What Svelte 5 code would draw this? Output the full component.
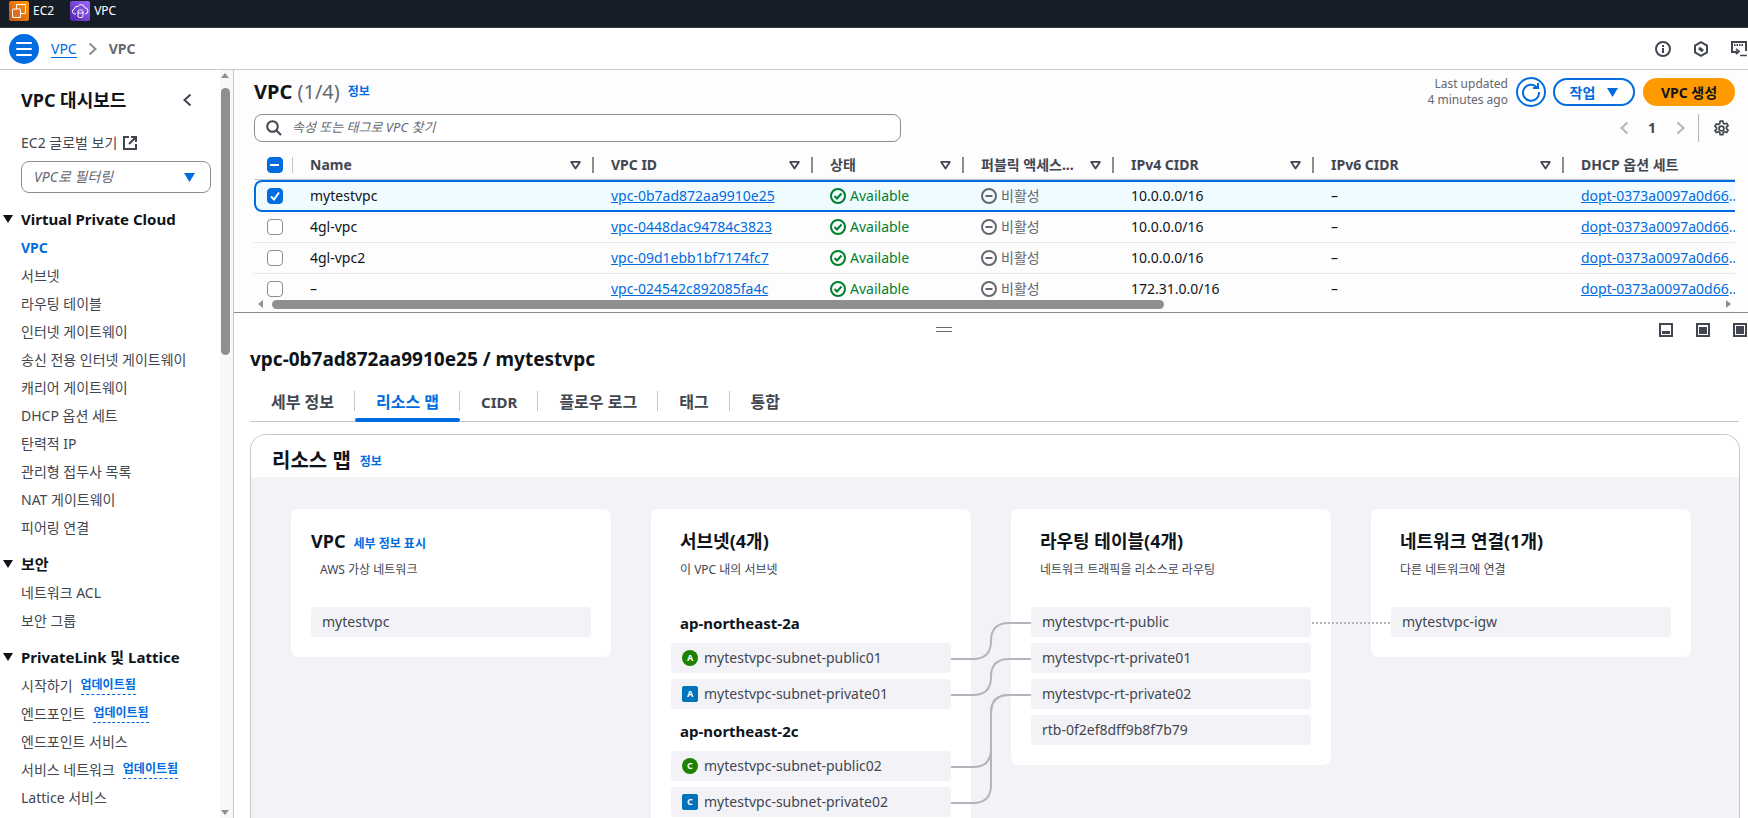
<script>
  const navA = ['서브넷','라우팅 테이블','인터넷 게이트웨이','송신 전용 인터넷 게이트웨이','캐리어 게이트웨이','DHCP 옵션 세트','탄력적 IP','관리형 접두사 목록','NAT 게이트웨이','피어링 연결'];
  const navC = [['시작하기',true],['엔드포인트',true],['엔드포인트 서비스',false],['서비스 네트워크',true],['Lattice 서비스',false]];
  const cols = [['Name',1],['VPC ID',1],['상태',1],['퍼블릭 액세스...',1],['IPv4 CIDR',1],['IPv6 CIDR',1],['DHCP 옵션 세트',0]];
  const rows = [
    {n:'mytestvpc',id:'vpc-0b7ad872aa9910e25',c:'10.0.0.0/16',sel:true},
    {n:'4gl-vpc',id:'vpc-0448dac94784c3823',c:'10.0.0.0/16'},
    {n:'4gl-vpc2',id:'vpc-09d1ebb1bf7174fc7',c:'10.0.0.0/16'},
    {n:'–',id:'vpc-024542c892085fa4c',c:'172.31.0.0/16'}
  ];
  const tabs = ['세부 정보','리소스 맵','CIDR','플로우 로그','태그','통합'];
  const subnets = [
    {az:'ap-northeast-2a',items:[['A','mytestvpc-subnet-public01',true],['A','mytestvpc-subnet-private01',false]]},
    {az:'ap-northeast-2c',items:[['C','mytestvpc-subnet-public02',true],['C','mytestvpc-subnet-private02',false]]}
  ];
  const routes = ['mytestvpc-rt-public','mytestvpc-rt-private01','mytestvpc-rt-private02','rtb-0f2ef8dff9b8f7b79'];
</script>

{#snippet filter()}
  <svg class="filter" viewBox="0 0 12 10" width="11" height="9"><path d="M1.2 1h9.6L6 8.4z" fill="none" stroke="#424650" stroke-width="2" stroke-linejoin="round"/></svg>
{/snippet}

<div class="page">
  <header class="top">
    <span class="svc">
      <svg width="20" height="20" viewBox="0 0 20 20"><defs><linearGradient id="o" x1="0" y1="1" x2="1" y2="0"><stop offset="0" stop-color="#c8511b"/><stop offset="1" stop-color="#ff9900"/></linearGradient></defs><rect width="20" height="20" rx="2" fill="url(#o)"/><g fill="none" stroke="#fff" stroke-width="1"><rect x="7.500" y="3.500" width="9" height="9" rx=".5"/><rect x="3.500" y="8" width="8" height="8.500" rx=".5" fill="#e0701e"/></g></svg>
      EC2
    </span>
    <span class="svc">
      <svg width="20" height="20" viewBox="0 0 20 20"><defs><linearGradient id="p" x1="0" y1="1" x2="1" y2="0"><stop offset="0" stop-color="#4d27a8"/><stop offset="1" stop-color="#a166ff"/></linearGradient></defs><rect width="20" height="20" rx="2" fill="url(#p)"/><g fill="none" stroke="#fff" stroke-width="1"><path d="M6 13H5a2.600 2.600 0 0 1-.6-5.100A3 3 0 0 1 8 5.400a3.600 3.600 0 0 1 6.700 1.400A3.100 3.100 0 0 1 15 13"/><rect x="8" y="9" width="5" height="7.500" rx="1.500"/><path d="M8 11a2.500 1.200 0 0 0 5 0"/></g></svg>
      VPC
    </span>
  </header>

  <nav class="crumbs">
    <button class="burger" aria-label="메뉴"><i></i><i></i><i></i></button>
    <a class="crumb-link">VPC</a>
    <svg width="9" height="14" viewBox="0 0 9 14"><path d="M1.500 1.500 7.500 7l-6 5.500" fill="none" stroke="#8c8c94" stroke-width="2"/></svg>
    <b class="crumb-cur">VPC</b>
    <span class="spacer"></span>
    <span class="nav-icons">
      <svg width="16" height="16" viewBox="0 0 16 16"><circle cx="8" cy="8" r="7" fill="none" stroke="#424650" stroke-width="2"/><path d="M8 7v5M8 4v2" stroke="#424650" stroke-width="2"/></svg>
      <svg width="16" height="16" viewBox="0 0 16 16"><path d="M8 1.200 14 4.600v6.800L8 14.800 2 11.400V4.600z" fill="none" stroke="#424650" stroke-width="2"/><path d="M6 7 10 10" stroke="#424650" stroke-width="3"/></svg>
      <svg width="16" height="16" viewBox="0 0 16 16"><path d="M6 11H1V1h14v9" fill="none" stroke="#424650" stroke-width="2"/><path d="M3 4h9" fill="none" stroke="#424650" stroke-width="2" stroke-dasharray="1.500 1"/><path d="M5 8l3 2.500L5 13M9 14.500h7" fill="none" stroke="#424650" stroke-width="1.700"/></svg>
    </span>
  </nav>

  <div class="shell-body">
    <aside class="side">
      <div class="side-inner">
        <div class="side-head"><h2>VPC 대시보드</h2>
          <svg width="9" height="14" viewBox="0 0 9 14"><path d="M7.500 1.500 1.500 7l6 5.500" fill="none" stroke="#424650" stroke-width="2"/></svg>
        </div>
        <div class="ec2">EC2 글로벌 보기
          <svg width="14" height="14" viewBox="0 0 14 14"><path d="M6 1H1v12h12V8M8 1h5v5M13 1 6 8" fill="none" stroke="#424650" stroke-width="2"/></svg>
        </div>
        <div class="filter-sel"><em>VPC로 필터링</em><svg width="11" height="9" viewBox="0 0 11 9"><path d="M0 0h11L5.500 9z" fill="#006ce0"/></svg></div>

        <h3 class="grp first"><span class="tri"></span>Virtual Private Cloud</h3>
        <div class="it cur">VPC</div>
        {#each navA as t}<div class="it">{t}</div>{/each}

        <h3 class="grp"><span class="tri"></span>보안</h3>
        <div class="it">네트워크 ACL</div>
        <div class="it">보안 그룹</div>

        <h3 class="grp"><span class="tri"></span>PrivateLink 및 Lattice</h3>
        {#each navC as [t,u]}<div class="it">{t}{#if u}<span class="upd">업데이트됨</span>{/if}</div>{/each}
      </div>
      <div class="vscroll"><span class="up"></span><span class="thumb"></span><span class="down"></span></div>
    </aside>

    <main class="main">
      <section class="list">
        <div class="list-head">
          <h1>VPC <span>(1/4)</span></h1><a class="info">정보</a>
          <span class="spacer"></span>
          <div class="updated">Last updated<br>4 minutes ago</div>
          <button class="refresh" aria-label="새로고침"><svg width="20" height="20" viewBox="0 0 20 20"><path d="M15.800 5.200A8 8 0 1 0 18 10" fill="none" stroke="#006ce0" stroke-width="2"/><path d="M17 1v5h-5" fill="none" stroke="#006ce0" stroke-width="2"/></svg></button>
          <button class="act">작업<svg width="11" height="9" viewBox="0 0 11 9"><path d="M0 0h11L5.500 9z" fill="#006ce0"/></svg></button>
          <button class="create">VPC 생성</button>
        </div>
        <div class="search-row">
          <div class="search">
            <svg width="16" height="16" viewBox="0 0 16 16"><circle cx="6.500" cy="6.500" r="5.300" fill="none" stroke="#424650" stroke-width="2"/><path d="m10.500 10.500 4.500 4.500" stroke="#424650" stroke-width="2"/></svg>
            <em>속성 또는 태그로 VPC 찾기</em>
          </div>
          <div class="pager">
            <svg width="9" height="14" viewBox="0 0 9 14"><path d="M7.500 1.500 1.500 7l6 5.500" fill="none" stroke="#b4b4bb" stroke-width="2"/></svg>
            <b>1</b>
            <svg width="9" height="14" viewBox="0 0 9 14"><path d="M1.500 1.500 7.500 7l-6 5.500" fill="none" stroke="#b4b4bb" stroke-width="2"/></svg>
            <span class="psep"></span>
            <svg width="17" height="17" viewBox="0 0 16 16"><circle cx="8" cy="8" r="2.300" fill="none" stroke="#424650" stroke-width="1.600"/><path d="M6.700 1h2.600l.4 2 1.300.7 1.900-.7 1.300 2.300-1.500 1.300v1.600l1.500 1.300-1.300 2.300-1.900-.7-1.300.7-.4 2H6.700l-.4-2-1.300-.7-1.900.7L1.800 10l1.500-1.300V7.200L1.800 5.900 3.100 3.600l1.900.7 1.300-.7z" fill="none" stroke="#424650" stroke-width="1.600" stroke-linejoin="round"/></svg>
          </div>
        </div>
        <div class="table">
          <div class="tr th">
            <div class="c0"><span class="cb on"><i class="dash"></i></span><u class="sep light"></u></div>
            {#each cols as [t,f]}
              <div class="c">{t}{#if f}{@render filter()}<u class="sep"></u>{/if}</div>
            {/each}
          </div>
          {#each rows as r}
            <div class="tr row" class:sel={r.sel}>
              <div class="c0"><span class="cb" class:on={r.sel}>{#if r.sel}<svg width="12" height="12" viewBox="0 0 12 12"><path d="M2 6.500 5 9.500 10 2.500" fill="none" stroke="#fff" stroke-width="2"/></svg>{/if}</span></div>
              <div class="c">{r.n}</div>
              <div class="c"><a class="lnk">{r.id}</a></div>
              <div class="c ok"><svg width="16" height="16" viewBox="0 0 16 16"><circle cx="8" cy="8" r="7" fill="none" stroke="#00802f" stroke-width="2"/><path d="m4.500 8 2.500 2.500L11.500 5.500" fill="none" stroke="#00802f" stroke-width="2"/></svg>Available</div>
              <div class="c off"><svg width="16" height="16" viewBox="0 0 16 16"><circle cx="8" cy="8" r="7" fill="none" stroke="#656871" stroke-width="2"/><path d="M4.500 8h7" stroke="#656871" stroke-width="2"/></svg>비활성</div>
              <div class="c">{r.c}</div>
              <div class="c">–</div>
              <div class="c"><a class="lnk">dopt-0373a0097a0d66</a><span class="dots">..</span></div>
            </div>
          {/each}
        </div>
        <div class="hscroll"><span class="la"></span><span class="hthumb"></span><span class="ra"></span></div>
      </section>

      <section class="detail">
        <div class="handle"></div>
        <div class="split-icons">
          <span class="sp s1"></span><span class="sp s2"></span><span class="sp s3"></span>
        </div>
        <h2 class="d-title">vpc-0b7ad872aa9910e25 / mytestvpc</h2>
        <div class="tabs">
          {#each tabs as t,i}<div class="tab" class:active={i===1} class:latin={t==='CIDR'}>{t}</div>{/each}
        </div>
        <div class="map">
          <div class="map-head"><h2>리소스 맵</h2><a class="info">정보</a></div>
          <div class="map-body">
            <div class="card short">
              <h3>VPC <a class="info big">세부 정보 표시</a></h3>
              <p class="vp">AWS 가상 네트워크</p>
              <div class="pill first">mytestvpc</div>
            </div>
            <div class="card">
              <h3 class="in">서브넷(4개)</h3>
              <p class="in">이 VPC 내의 서브넷</p>
              {#each subnets as s,i}
                <div class="az" class:a1={i===0}>{s.az}</div>
                {#each s.items as [l,t,pub]}
                  <div class="pill sub"><span class="badge" class:pub>{l}</span>{t}</div>
                {/each}
              {/each}
            </div>
            <div class="card rt">
              <h3 class="in">라우팅 테이블(4개)</h3>
              <p class="in">네트워크 트래픽을 리소스로 라우팅</p>
              {#each routes as t,i}<div class="pill" class:first={i===0}>{t}</div>{/each}
            </div>
            <div class="card short">
              <h3 class="in">네트워크 연결(1개)</h3>
              <p class="in">다른 네트워크에 연결</p>
              <div class="pill first">mytestvpc-igw</div>
            </div>
            <svg class="wires" width="1488" height="341" viewBox="251 477 1488 341">
              <g fill="none" stroke="#b4b4bb" stroke-width="2">
                <path d="M951 659H973Q991 659 991 641Q991 623 1009 623H1031"/>
                <path d="M951 695H973Q991 695 991 677Q991 659 1009 659H1031"/>
                <path d="M951 767H973Q991 767 991 749V713Q991 695 1009 695H1031"/>
                <path d="M951 803H973Q991 803 991 785V713Q991 695 1009 695H1031"/>
                <path d="M1312 623H1391" stroke-dasharray="2 2"/>
              </g>
            </svg>
          </div>
        </div>
      </section>
    </main>
  </div>
</div>

<style>
  :global(body){margin:0;background:#fff;overflow:hidden}
  .page{width:1748px;height:818px;overflow:hidden;display:flex;flex-direction:column;font:14px/20px "Noto Sans","Noto Sans CJK KR",sans-serif;color:#0f141a}
  h1,h2,h3,p{margin:0}
  .spacer{flex:1}
  a{color:#006ce0}
  .top{background:#161d26;border-bottom:1px solid #333a45;display:flex;align-items:flex-start;padding:1px 0 0 9px;gap:16px;flex:none;box-sizing:border-box;height:28px}
  .svc{display:flex;align-items:center;gap:4px;color:#fff;font-size:12px;line-height:20px}
  .crumbs{height:41px;border-bottom:1px solid #c6c6cd;display:flex;align-items:center;padding:0 0 0 9px;flex:none}
  .burger{width:30px;height:30px;border-radius:50%;border:0;background:#006ce0;padding:8px 7px;display:flex;flex-direction:column;justify-content:space-between;margin-right:12px}
  .burger i{display:block;height:2px;background:#fff;border-radius:1px}
  .crumb-link{border-bottom:1px solid #006ce0;line-height:17px;margin-right:11px;font-size:14px}
  .crumb-cur{margin-left:12px;color:#656871;font-weight:700}
  .nav-icons{display:flex;gap:22px;margin-right:-1px;width:94px;overflow:hidden;flex:none}
  .nav-icons svg{flex:none}
  .shell-body{flex:1;display:flex;min-height:0}
  .side{width:233px;flex:none;border-right:1px solid #c6c6cd;display:flex;overflow:hidden}
  .side-inner{flex:1;padding:19px 0 0 21px;min-width:0}
  .side-head{display:flex;align-items:center;justify-content:space-between;padding-right:28px;height:22px}
  .side-head h2{font-size:18px;font-weight:700;line-height:22px}
  .ec2{margin-top:22px;color:#424650;display:flex;align-items:center;gap:6px;line-height:20px}
  .filter-sel{margin-top:8px;width:190px;height:32px;box-sizing:border-box;border:1px solid #8c8c94;border-radius:8px;display:flex;align-items:center;justify-content:space-between;padding:0 15px 0 12px}
  .filter-sel em{color:#656871;font-size:14px}
  .grp{position:relative;font-size:15px;font-weight:700;line-height:22px;margin-top:8px;margin-bottom:7px}
  .grp.first{margin-top:15px}
  .tri{position:absolute;left:-18px;top:7px;border:5px solid transparent;border-top:8px solid #0f141a;border-bottom:0}
  .it{height:28px;line-height:20px;color:#424650;display:flex;align-items:flex-start;white-space:nowrap;font-size:14px;padding-top:1px;box-sizing:border-box}
  .it.cur{color:#006ce0;font-weight:700}
  .upd{color:#006ce0;font-size:12px;font-weight:700;border-bottom:1px dashed #006ce0;margin-left:8px;line-height:18px;height:18px}
  .vscroll{width:13px;flex:none;background:#f8f8f8;position:relative}
  .thumb{position:absolute;left:1px;width:9px;top:18px;height:267px;background:#8f8f8f;border-radius:5px}
  .up,.down{position:absolute;left:1px;border:4.500px solid transparent}
  .up{top:3px;border-bottom:5px solid #8f8f8f;border-top:0}
  .down{bottom:3px;border-top:5px solid #8f8f8f;border-bottom:0}
  .main{flex:1;min-width:0;display:flex;flex-direction:column}
  .list{height:243px;flex:none;box-sizing:border-box;border-bottom:1px solid #8c8c94;padding:8px 13px 0 20px;background:#fdfdfd}
  .list-head{display:flex;align-items:center;height:28px}
  .list-head h1{font-size:20px;font-weight:700;line-height:26px;padding-bottom:1px}
  .list-head h1 span{font-weight:400;color:#656871}
  .info{font-size:12px;font-weight:700;margin-left:8px;line-height:16px}
  .updated{font-size:12px;line-height:16px;color:#656871;text-align:right;margin-right:8px}
  button{font-family:inherit}
  .refresh{width:30px;height:30px;border-radius:50%;border:2px solid #006ce0;background:#fff;padding:0;display:flex;align-items:center;justify-content:center;margin-right:7px}
  .act{width:82px;height:28px;border:2px solid #006ce0;border-radius:14px;background:#fff;color:#006ce0;font-weight:700;font-size:14px;display:flex;align-items:center;justify-content:center;gap:12px;margin-right:8px;padding:0}
  .create{width:92px;height:28px;border:0;border-radius:14px;background:#ff9900;color:#0f141a;font-weight:700;font-size:14px;padding:0}
  .search-row{display:flex;align-items:center;justify-content:space-between;margin-top:8px;height:28px}
  .search{width:647px;height:28px;box-sizing:border-box;border:1px solid #8c8c94;border-radius:8px;display:flex;align-items:center;padding-left:11px;gap:10px;background:#fff}
  .search em{color:#656871;font-size:13px;line-height:20px;padding-bottom:2px}
  .pager{display:flex;align-items:center;height:28px;padding-right:5px}
  .pager b{margin:0 19px;font-size:14px;color:#424650;width:9px;text-align:center}
  .psep{width:1px;height:28px;background:#b4b4bb;margin:0 14px 0 13.500px}
  .table{margin-top:9px;overflow:hidden;width:1481px}
  .tr{display:grid;grid-template-columns:39px 301px 219px 151px 150px 200px 250px 200px;width:1510px}
  .th{font-weight:700;color:#424650;border-bottom:1px solid #c6c6cd;height:28px}
  .c0{position:relative;display:flex;align-items:center;justify-content:center;padding-left:2px}
  .c{position:relative;display:flex;align-items:center;padding-left:17px;white-space:nowrap;overflow:hidden}
  .th .c{padding-right:42px;overflow:visible}
  .filter{position:absolute;right:13px;top:10px}
  .sep{position:absolute;right:0;top:6px;width:2px;height:16px;background:#8c8c94}
  .sep.light{width:1.500px;background:#c6c6cd}
  .cb{width:16px;height:16px;box-sizing:border-box;border:1.500px solid #8c8c94;border-radius:4px;display:flex;align-items:center;justify-content:center;background:#fff}
  .cb.on{background:#006ce0;border-color:#006ce0}
  .dash{width:9px;height:2px;background:#fff}
  .row{height:30px;border-bottom:1px solid #e8e8ec;color:#0f141a}
  .row:last-child{border-bottom:0;padding-bottom:1px}
  .row.sel{height:32px;border-bottom:0;box-shadow:inset 0 0 0 2px #006ce0;border-radius:8px 0 0 8px;background:#f0fbff}
  .lnk{color:#006ce0;text-decoration:underline}
  .ok{color:#00802f;gap:4px}
  .off{color:#656871;gap:4px}
  .dots{color:#006ce0}
  .hscroll{position:relative;height:12px;margin-top:-5px}
  .hthumb{position:absolute;left:18px;width:892px;top:0;height:9px;background:#8f8f8f;border-radius:5px}
  .la,.ra{position:absolute;top:0;border:4.500px solid transparent}
  .la{left:4px;border-right:5px solid #8f8f8f;border-left:0}
  .ra{right:4px;border-left:5px solid #8f8f8f;border-right:0}
  .detail{position:relative;flex:1;min-height:0;padding:0 9px 0 16px;overflow:hidden}
  .handle{position:absolute;left:702px;top:14px;width:16px;height:5px;border-top:1px solid #656871;border-bottom:1px solid #656871;box-sizing:border-box}
  .split-icons{position:absolute;right:1px;top:10px;display:flex;gap:23px}
  .sp{width:10px;height:10px;border:2px solid #424650;position:relative;display:block}
  .sp::after{content:"";position:absolute;background:#424650;left:1px;right:1px;bottom:1px;height:3px}
  .sp.s2::after{top:2px;bottom:1px;height:auto}
  .sp.s3::after{top:1px;height:auto}
  .d-title{font-size:19px;font-weight:700;line-height:24px;margin-top:34px}
  .tabs{margin-top:15px;display:flex;border-bottom:1px solid #c6c6cd;height:35px}
  .tab{position:relative;padding:6px 21px 0;font-weight:700;font-size:16px;color:#424650;line-height:20px;box-sizing:border-box;height:35px;white-space:nowrap}
  .tab.latin{font-size:15px}
  .tab:not(:last-child)::before{content:"";position:absolute;right:0;top:5px;height:20px;width:1px;background:#c6c6cd}
  .tab.active{color:#006ce0}
  .tab.active::after{content:"";position:absolute;left:0;right:0;bottom:-1px;height:4px;background:#006ce0;border-radius:2px}
  .map{margin-top:12px;border:1px solid #c6c6cd;border-bottom:0;border-radius:16px 16px 0 0;width:1488px;overflow:hidden;height:500px}
  .map-head{height:42px;display:flex;align-items:center;padding-left:21px;padding-top:9px;box-sizing:border-box;background:#fff}
  .map-head h2{font-size:20px;font-weight:700}
  .map-head .info{margin-left:9px;margin-top:3px}
  .map-body{position:relative;background:#f3f3f7;height:450px;padding:32px 0 0 40px;display:flex;gap:40px;align-items:flex-start;box-sizing:border-box}
  .card{width:320px;flex:none;background:#fff;border-radius:8px;box-sizing:border-box;padding:20px;height:420px}
  .card.short{height:148px}
  .card.rt{height:256px}
  .card h3{font-size:18px;font-weight:700;line-height:24px;display:flex;align-items:baseline}
  .card h3.in{padding-left:9px}
  .info.big{font-size:12px;margin-left:8px}
  .card p{font-size:12px;line-height:16px;color:#424650;margin-top:9px;height:45px;padding-left:9px}
  .pill{height:30px;background:#f3f3f7;border-radius:4px;margin-top:6px;padding-left:11px;display:flex;align-items:center;color:#424650;font-size:14px;white-space:nowrap}
  .pill.first{margin-top:0}
  .az{font-weight:700;font-size:15px;line-height:20px;padding-left:9px;margin-top:12px;margin-bottom:10px}
  .az.a1{margin-top:6px}
  .pill.sub{gap:6px}
  .badge{width:16px;height:16px;border-radius:2px;background:#0073bb;color:#fff;font-size:9px;font-weight:700;line-height:16px;text-align:center;flex:none}
  .badge.pub{background:#1d8102;border-radius:50%}
  .wires{position:absolute;left:0;top:0;pointer-events:none}
</style>
